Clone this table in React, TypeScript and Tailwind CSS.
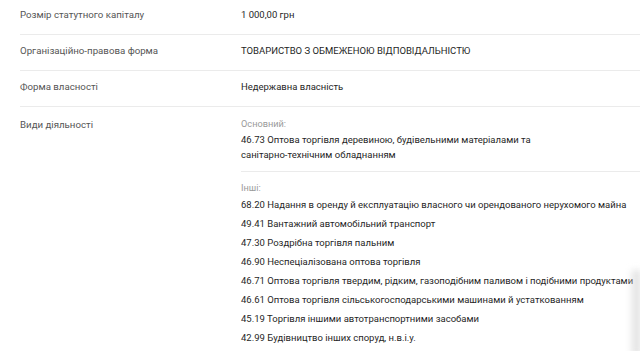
import React from "react";

const rows = [
  { label: "Розмір статутного капіталу", value: "1 000,00 грн" },
  { label: "Організаційно-правова форма", value: "ТОВАРИСТВО З ОБМЕЖЕНОЮ ВІДПОВІДАЛЬНІСТЮ" },
  { label: "Форма власності", value: "Недержавна власність" },
];

const others = [
  "68.20 Надання в оренду й експлуатацію власного чи орендованого нерухомого майна",
  "49.41 Вантажний автомобільний транспорт",
  "47.30 Роздрібна торгівля пальним",
  "46.90 Неспеціалізована оптова торгівля",
  "46.71 Оптова торгівля твердим, рідким, газоподібним паливом і подібними продуктами",
  "46.61 Оптова торгівля сільськогосподарськими машинами й устаткованням",
  "45.19 Торгівля іншими автотранспортними засобами",
  "42.99 Будівництво інших споруд, н.в.і.у.",
];

export default function App() {
  return (
    <div className="relative w-[640px] h-[351px] overflow-hidden bg-white pl-[20px] font-['Roboto',sans-serif] text-[9.5px]">
      {rows.map((row, i) => (
        <div
          key={row.label}
          className={
            i === 0
              ? "flex border-b border-[#ebebeb] pt-[8px] pb-[12px] leading-[14px]"
              : "flex border-b border-[#ebebeb] pt-[9px] pb-[12px] leading-[14px]"
          }
        >
          <div className="w-[221px] shrink-0 text-[9.7px] text-[#555555]">{row.label}</div>
          <div className="flex-1 text-[#1f1f1f]">{row.value}</div>
        </div>
      ))}
      <div className="flex">
        <div className="w-[221px] shrink-0 pt-[11px] leading-[14px] text-[9.7px] text-[#555555]">Види діяльності</div>
        <div className="flex-1">
          <div className="border-b border-[#ebebeb] pt-[9px] pb-[9px]">
            <div className="leading-[16px] text-[9.2px] text-[#9a9a9a]">Основний:</div>
            <div className="leading-[15px] text-[#1f1f1f]">
              46.73 Оптова торгівля деревиною, будівельними матеріалами та
              <br />
              санітарно-технічним обладнанням
            </div>
          </div>
          <div className="pt-[9px]">
            <div className="leading-[14px] text-[9.2px] text-[#9a9a9a]">Інші:</div>
            {others.map((item) => (
              <div key={item} className="leading-[19px] whitespace-nowrap text-[#1f1f1f]">
                {item}
              </div>
            ))}
          </div>
        </div>
      </div>
      <div className="absolute right-0 top-[270px] h-[85px] w-[12px] bg-gradient-to-l from-[#d6d6d6] to-transparent blur-[3px]" />
    </div>
  );
}
